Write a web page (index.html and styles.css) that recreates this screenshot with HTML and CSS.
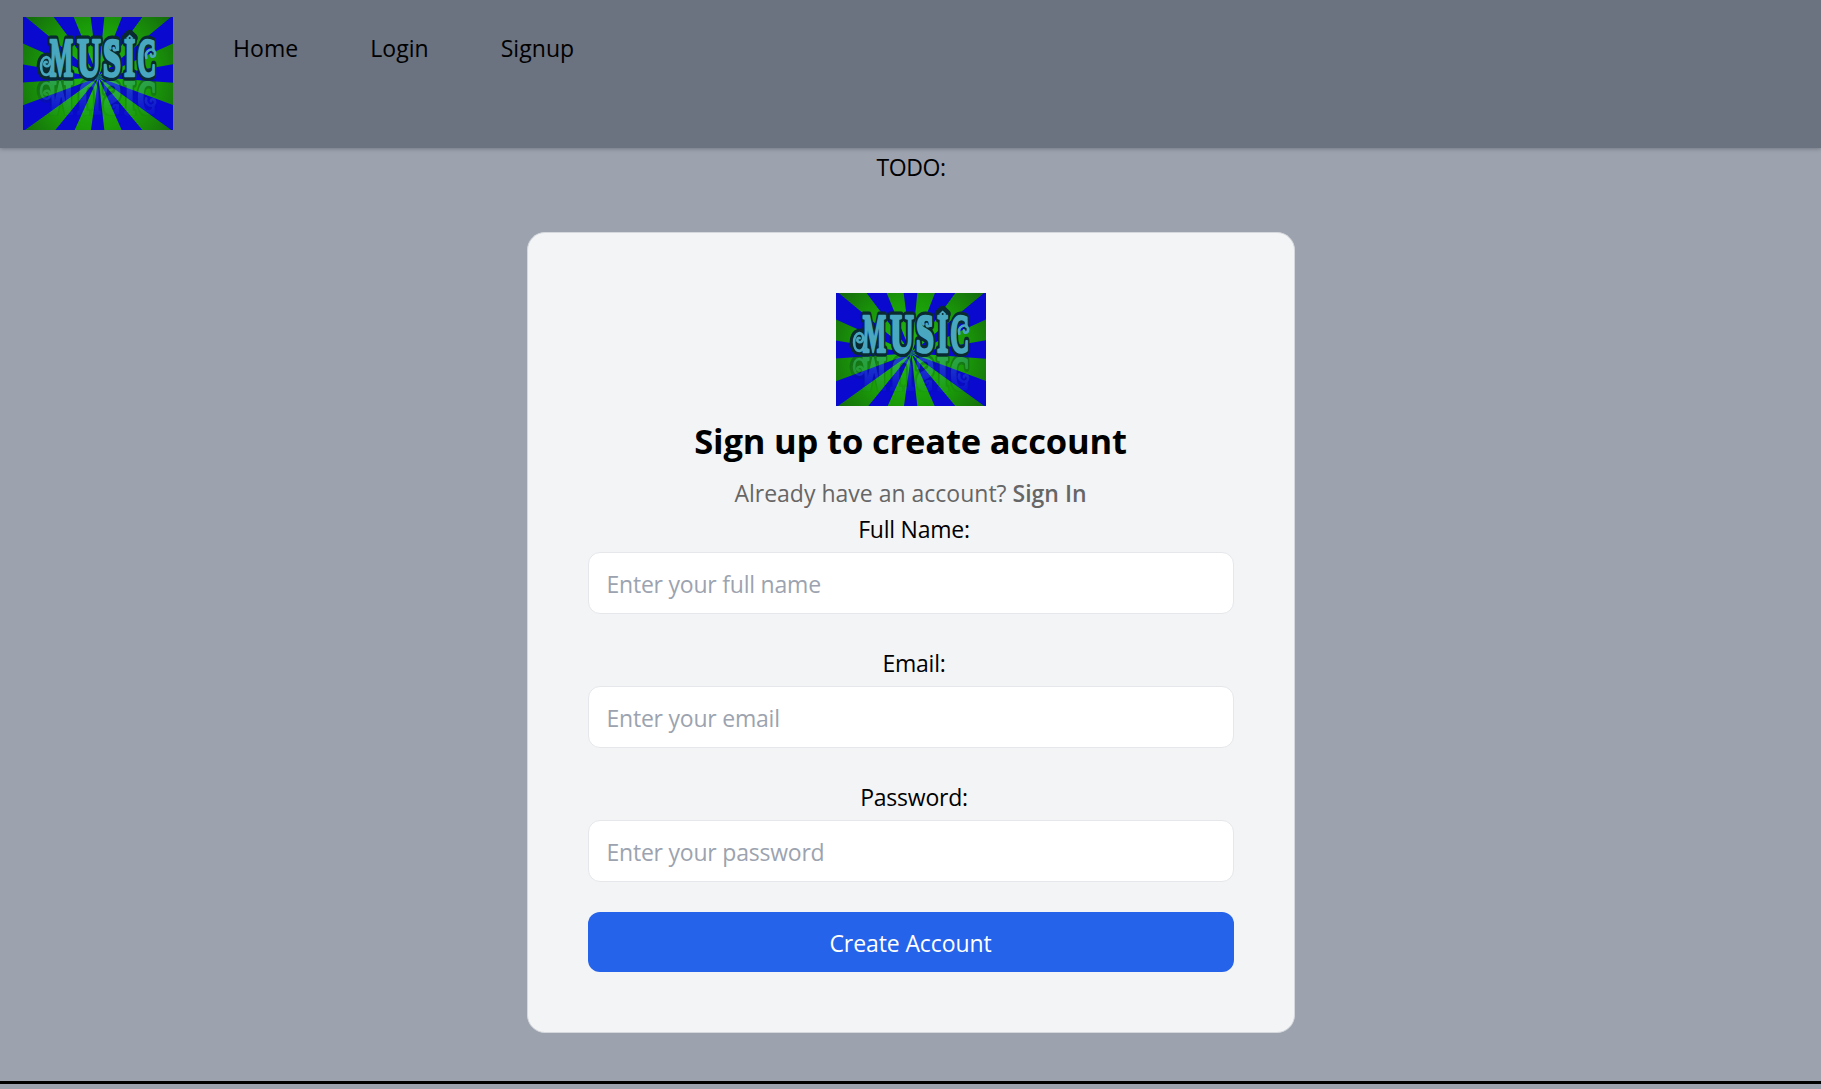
FILE: index.html
```html
<!DOCTYPE html>
<html lang="en">
<head>
<meta charset="utf-8">
<title>Sign up</title>
<link rel="stylesheet" href="styles.css">
</head>
<body>
<svg class="defs" width="0" height="0" aria-hidden="true">
  <defs>
    <radialGradient id="green" gradientUnits="userSpaceOnUse" cx="226" cy="180" r="285">
      <stop offset="0" stop-color="#22bd12"/>
      <stop offset="0.55" stop-color="#1a9c08"/>
      <stop offset="1" stop-color="#14680c"/>
    </radialGradient>
    <linearGradient id="fade" x1="0" y1="0" x2="0" y2="1">
      <stop offset="0" stop-color="#fff" stop-opacity="0.38"/>
      <stop offset="1" stop-color="#fff" stop-opacity="0.04"/>
    </linearGradient>
    <mask id="mirror" maskUnits="userSpaceOnUse" x="0" y="186" width="450" height="110">
      <rect x="0" y="186" width="450" height="110" fill="url(#fade)"/>
    </mask>
    <g id="letters">
      <text x="80" y="176" textLength="70" lengthAdjust="spacingAndGlyphs">M</text>
      <text x="162" y="176" textLength="72" lengthAdjust="spacingAndGlyphs">U</text>
      <text x="239" y="176" textLength="55" lengthAdjust="spacingAndGlyphs">S</text>
      <text x="303" y="176" textLength="34" lengthAdjust="spacingAndGlyphs">I</text>
      <text x="343" y="176" textLength="57" lengthAdjust="spacingAndGlyphs">C</text>
    </g>
    <path id="tail" d="M92 108C86 160 84 172 70 173C50 173 48 124 70 120C86 121 84 149 70 147C60 144 64 132 71 135"/>
    <g id="word">
      <g class="edge">
        <use href="#letters"/>
        <use class="curl" href="#tail"/>
        <path d="M320 52l11 11-11 11-11-11z"/>
      </g>
      <g class="face">
        <use href="#letters"/>
        <use class="curl" href="#tail"/>
        <path class="curl" d="M262 94C256 76 282 74 284 90C284 102 270 102 272 93M370 122C364 100 390 88 396 106C398 122 382 122 384 112"/>
      </g>
      <path class="diamond" d="M320 52l11 11-11 11-11-11z"/>
      <circle class="diamond-dot" cx="320" cy="63" r="3"/>
    </g>
    <symbol id="logo" viewBox="0 0 450 338" preserveAspectRatio="none">
      <rect width="450" height="338" fill="#0909d0"/>
      <path fill="url(#green)" d="M226 180L8 0H92zM226 180L152 0H203zM226 180L244 0H297zM226 180L358 0H444zM226 180L450 79V141zM226 180L450 197V263zM226 180L445 338H358zM226 180L296 338H244zM226 180L204 338H155zM226 180L97 338H6zM226 180L0 264V196zM226 180L0 142V79z"/>
      <g mask="url(#mirror)"><use href="#word" transform="matrix(1 0 0 -.9 0 353)"/></g>
      <use href="#word"/>
    </symbol>
  </defs>
</svg>
<header class="nav">
  <svg class="logo" role="img" aria-label="Music"><use href="#logo"/></svg>
  <nav class="links">
    <a href="#">Home</a>
    <a href="#">Login</a>
    <a href="#">Signup</a>
  </nav>
</header>
<main class="page">
  <p class="todo">TODO:</p>
  <section class="card">
    <svg class="logo" role="img" aria-label="Music"><use href="#logo"/></svg>
    <h2 class="title">Sign up to create account</h2>
    <p class="hint">Already have an account? <a href="#">Sign In</a></p>
    <form class="form">
      <div class="field">
        <label for="name">Full Name:</label>
        <input id="name" type="text" placeholder="Enter your full name">
      </div>
      <div class="field">
        <label for="email">Email:</label>
        <input id="email" type="email" placeholder="Enter your email">
      </div>
      <div class="field">
        <label for="password">Password:</label>
        <input id="password" type="password" placeholder="Enter your password">
      </div>
      <button class="submit" type="button">Create Account</button>
    </form>
  </section>
</main>
<footer class="footer"></footer>
</body>
</html>
```
FILE: styles.css
```css
* { box-sizing: border-box; margin: 0; padding: 0; }
html, body { height: 100%; overflow: hidden; }
body {
  background: #9ca3af;
  color: #000;
  font: 23px/36px "Open Sans", "Noto Sans", sans-serif;
  letter-spacing: -0.22px;
}
a { color: inherit; text-decoration: none; }
.defs { display: block; }
.logo { display: block; flex: none; width: 150px; height: 113px; }

.nav {
  display: flex;
  align-items: flex-start;
  height: 148px;
  padding: 17px 23px;
  background: #6b7280;
  box-shadow: 0 1px 4px rgba(0, 0, 0, 0.25);
}
.links { display: flex; gap: 72px; padding: 13px 0 0 60px; letter-spacing: 0.05px; }

.page { text-align: center; }
.todo { height: 36px; padding: 1px 0 0 1px; letter-spacing: -0.4px; }
.card {
  display: flex;
  flex-direction: column;
  align-items: center;
  width: 768px;
  height: 801px;
  margin: 48px auto 0;
  padding: 60px;
  background: #f3f4f6;
  border: 1px solid #d5d8dc;
  border-radius: 18px;
}
.title { margin-top: 12px; font-size: 34.5px; line-height: 45px; font-weight: 700; letter-spacing: -0.15px; }
.hint { margin-top: 12px; color: #666; letter-spacing: 0; }
.hint a { font-weight: 600; }
.form { width: 100%; }
.field { display: flex; flex-direction: column; margin-bottom: 30px; }
.field label { padding-left: 7px; margin-bottom: 5px; }
.field + .field { padding-top: 1px; }
.field input {
  height: 62px;
  padding: 2px 18px 0;
  border: 1px solid #e5e7eb;
  border-radius: 12px;
  background: #fff;
  font: inherit;
  letter-spacing: inherit;
}
.field input::placeholder { color: #9ca3af; opacity: 1; }
.submit {
  width: 100%;
  height: 60px;
  padding-top: 2px;
  border: 0;
  border-radius: 12px;
  background: #2563eb;
  color: #fff;
  font: inherit;
  letter-spacing: -0.1px;
}
.footer { margin-top: 48px; height: 8px; border-top: 3px solid #000; }

.edge, .face {
  font: bold 162px "Liberation Serif", serif;
  letter-spacing: 0;
  stroke-linejoin: round;
  stroke-linecap: round;
}
.edge { fill: #082a30; stroke: #082a30; stroke-width: 27px; }
.face { fill: #49a8c0; stroke: #49a8c0; stroke-width: 8px; }
.curl { fill: none; }
.diamond { fill: #49a8c0; }
.diamond-dot { fill: #082a30; }
```
